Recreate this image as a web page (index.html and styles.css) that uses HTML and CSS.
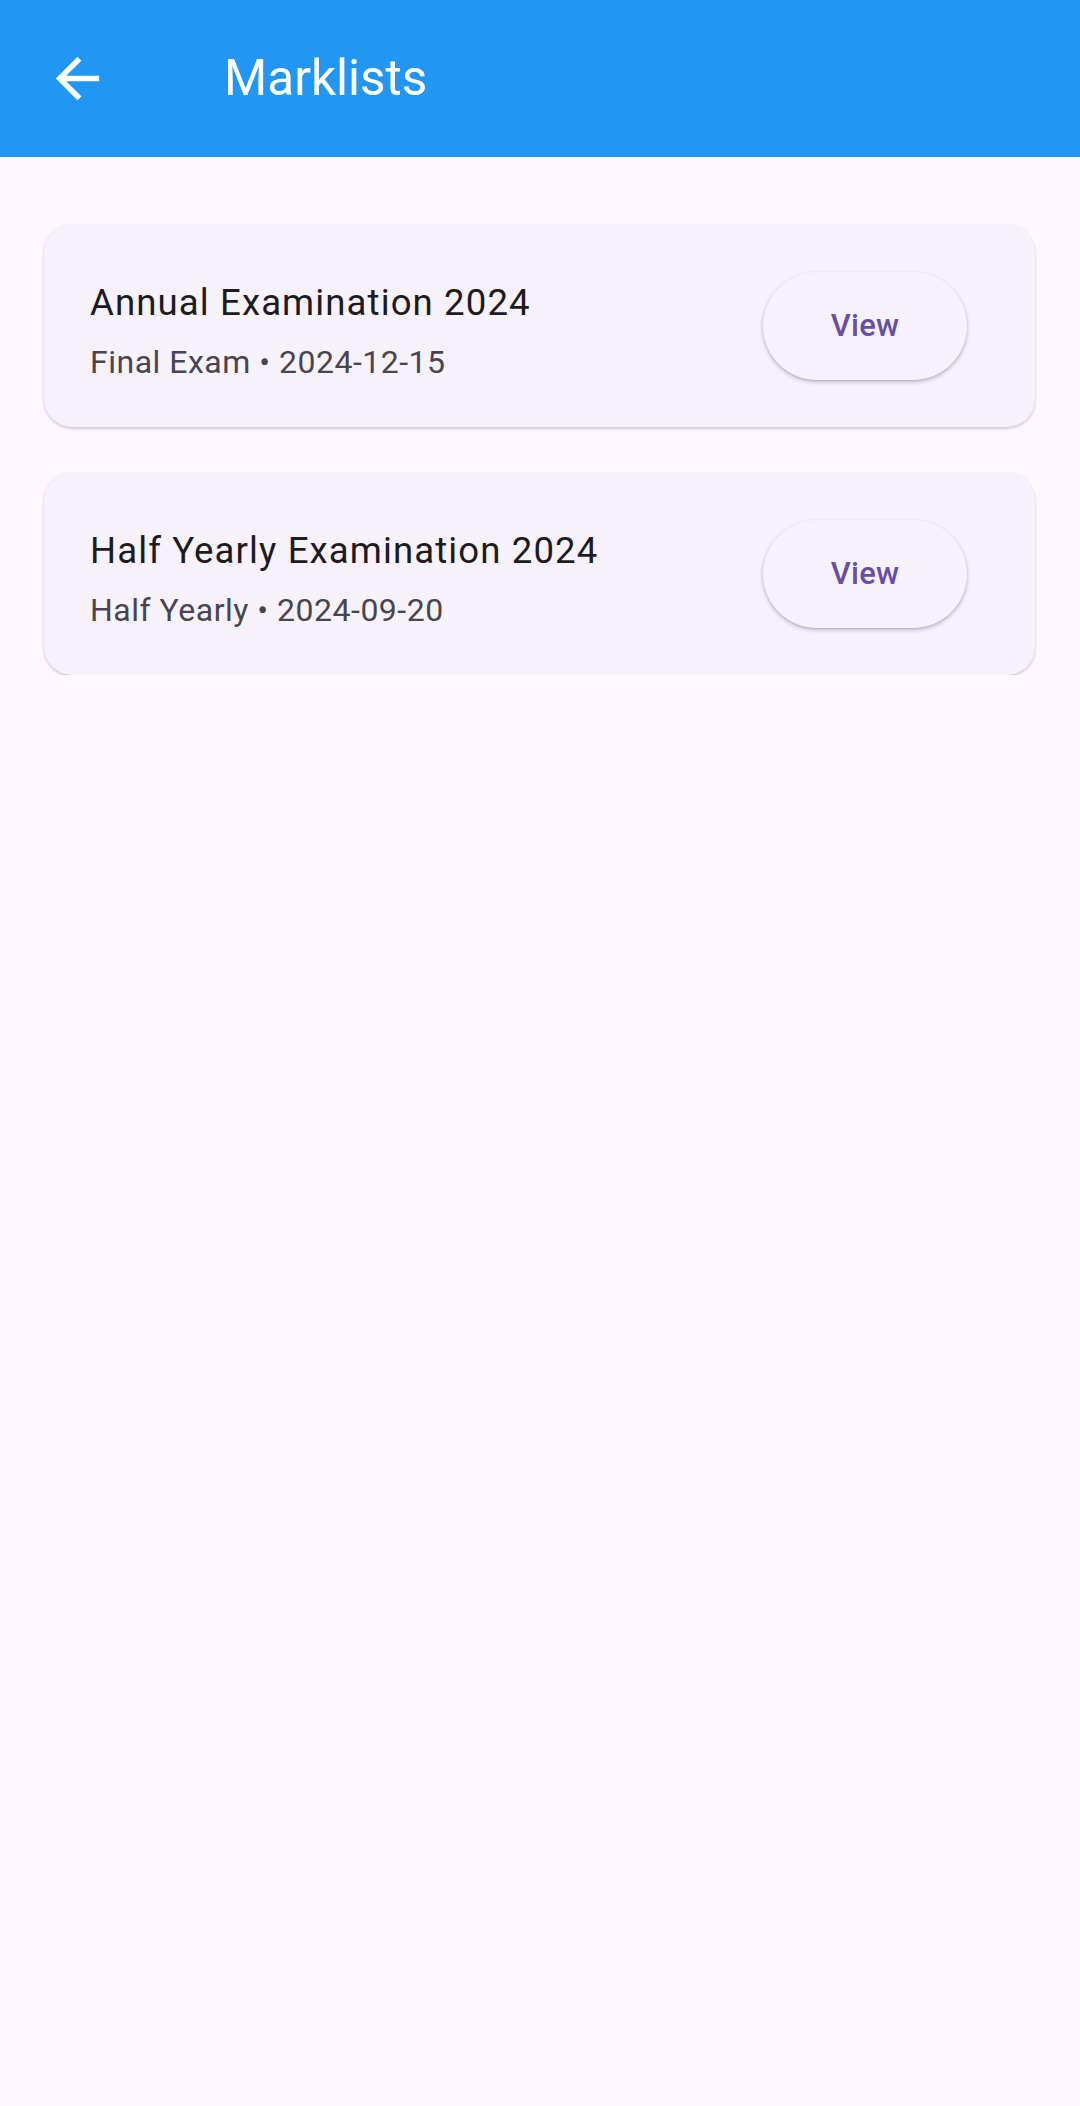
FILE: index.html
```html
<!DOCTYPE html>
<html>
<head>
<meta charset="utf-8">
<link rel="stylesheet" href="styles.css">
</head>
<body>
<header class="appbar">
  <div class="back">
    <svg viewBox="0 0 24 24" width="65" height="65"><path fill="#ffffff" d="M20 11H7.83l5.59-5.59L12 4l-8 8 8 8 1.41-1.41L7.83 13H20v-2z"/></svg>
  </div>
  <h1 class="title">Marklists</h1>
</header>
<main class="list">
  <div class="card">
    <div class="text">
      <div class="name">Annual Examination 2024</div>
      <div class="meta">Final Exam • 2024-12-15</div>
    </div>
    <button class="view">View</button>
  </div>
  <div class="card">
    <div class="text">
      <div class="name">Half Yearly Examination 2024</div>
      <div class="meta">Half Yearly • 2024-09-20</div>
    </div>
    <button class="view">View</button>
  </div>
</main>
</body>
</html>
```

FILE: styles.css
```css
html, body {
  margin: 0;
  padding: 0;
  background: #FEF7FF;
  font-family: Roboto, "Noto Sans", sans-serif;
}
.appbar {
  height: 157px;
  background: #2196F3;
  display: flex;
  align-items: center;
  box-sizing: border-box;
}
.back {
  width: 65px;
  height: 65px;
  margin-left: 45px;
}
.back svg { display: block; }
.title {
  margin: 0 0 0 114px;
  font-size: 49.5px;
  font-weight: 400;
  color: #ffffff;
  line-height: 1;
  letter-spacing: 0;
}
.list {
  padding: 67px 45px 0 44px;
  display: flex;
  flex-direction: column;
  gap: 45px;
}
.card {
  height: 203px;
  box-sizing: border-box;
  background: #F7F2FA;
  border-radius: 28px;
  box-shadow: 0 2px 3px rgba(0,0,0,0.17), 0 0 1px rgba(0,0,0,0.08);
  display: flex;
  align-items: center;
  padding: 0 68px 0 46px;
}
.text {
  flex: 1;
  display: flex;
  flex-direction: column;
  padding-top: 9px;
}
.name {
  font-size: 36.6px;
  line-height: 54px;
  letter-spacing: 1.1px;
  color: #1D1B20;
}
.meta {
  margin-top: 10px;
  font-size: 32px;
  line-height: 45px;
  letter-spacing: 0.5px;
  color: #49454F;
}
.view {
  width: 204px;
  height: 108px;
  border: none;
  border-radius: 54px;
  background: #F7F2FA;
  box-shadow: 0 2px 4px rgba(0,0,0,0.22), 0 1px 2px rgba(0,0,0,0.1);
  font-family: Roboto, sans-serif;
  font-size: 31px;
  font-weight: 500;
  letter-spacing: 0.3px;
  color: #6750A4;
  padding: 0;
}
```
